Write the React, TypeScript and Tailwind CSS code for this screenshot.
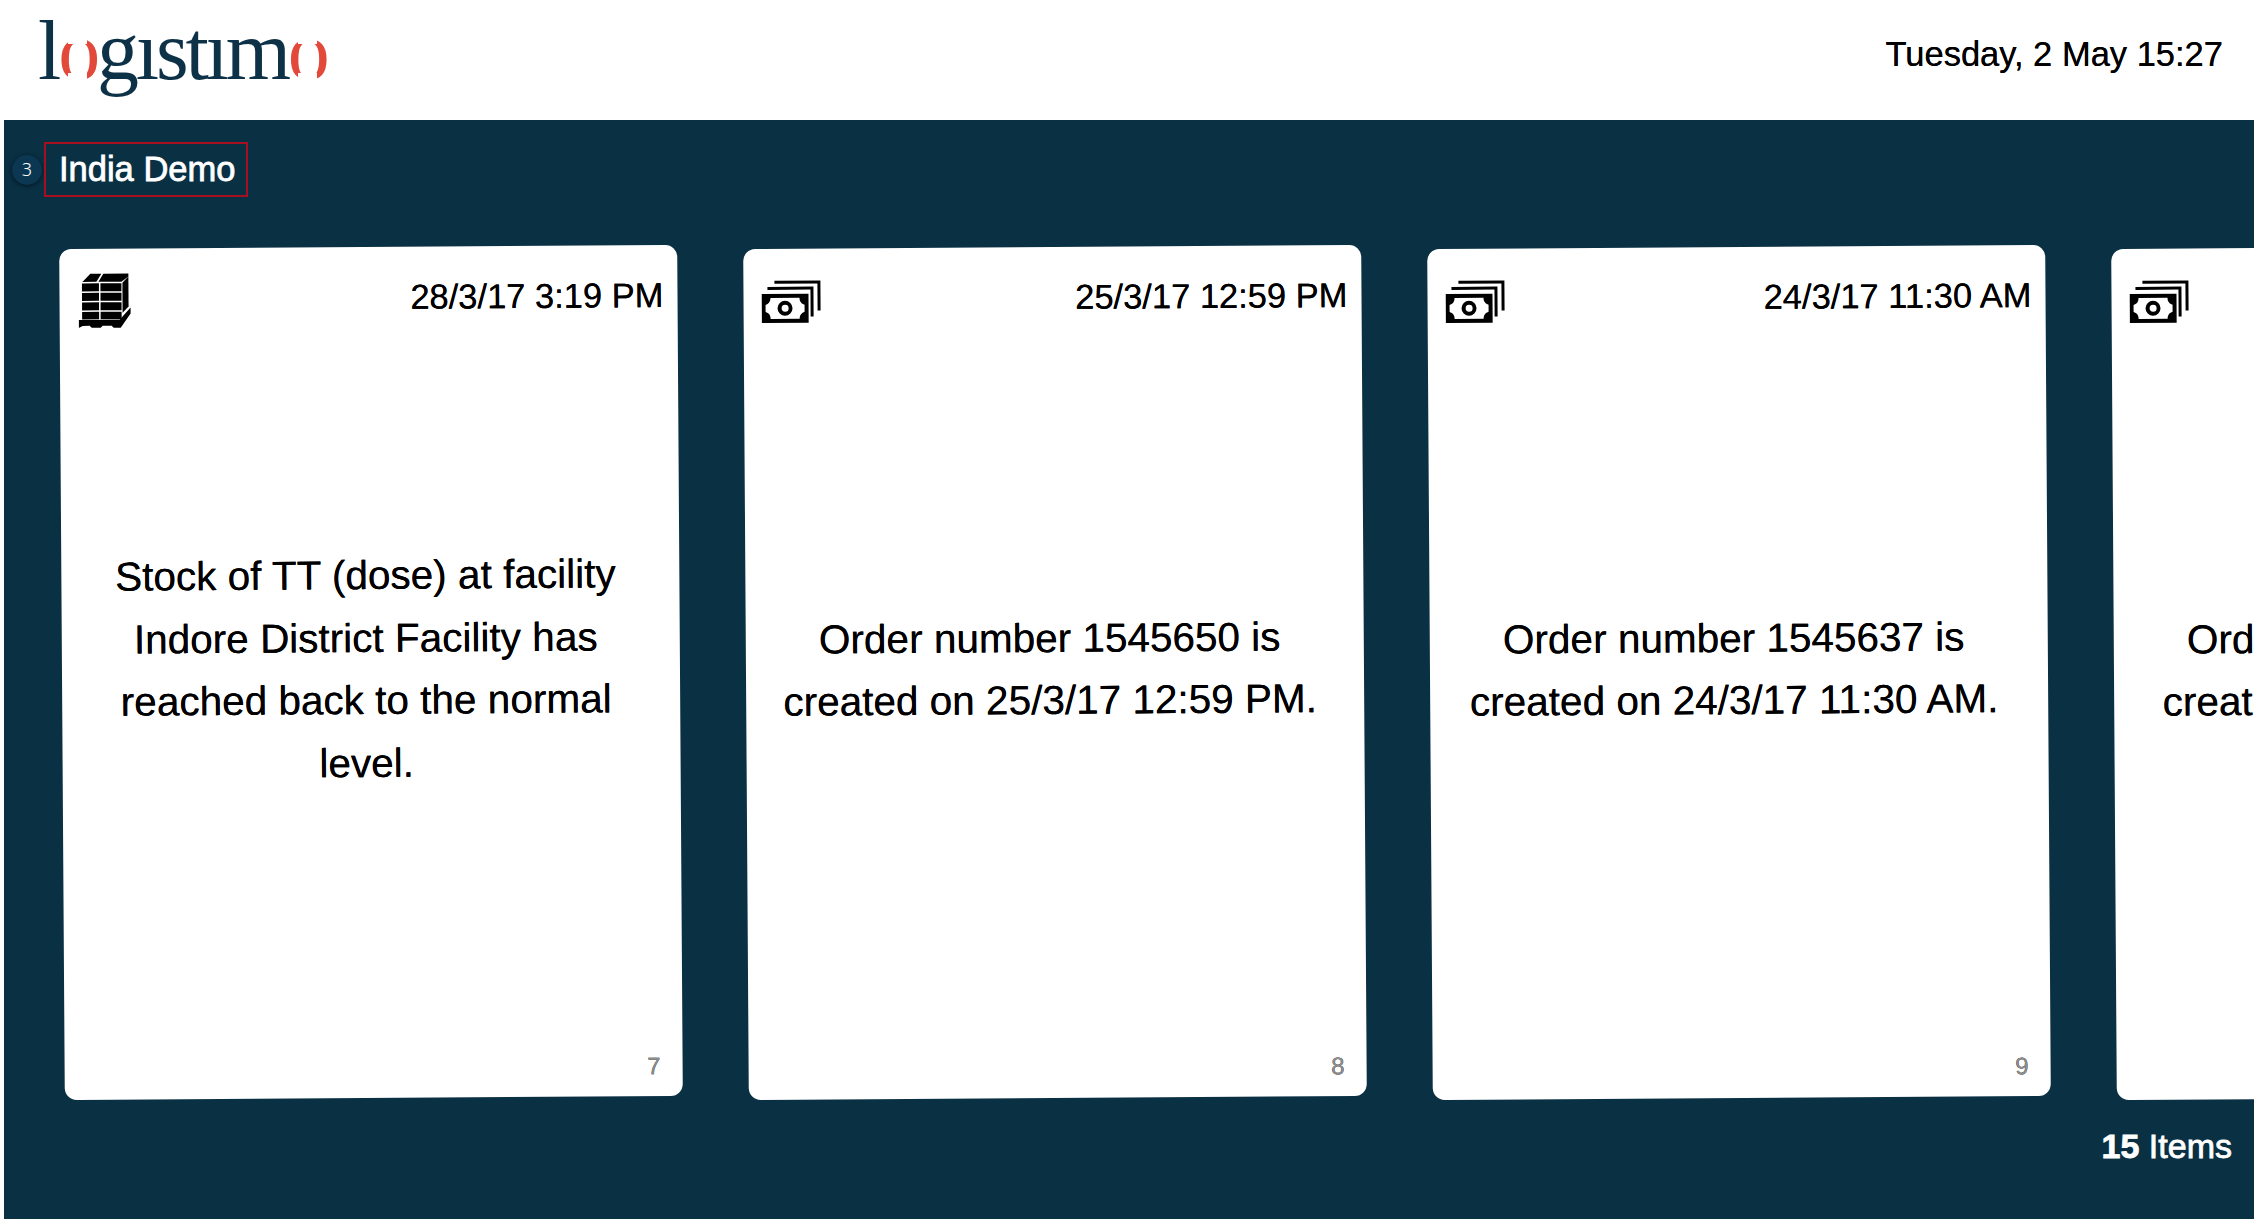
const sans = "font-['Liberation_Sans',Arial,sans-serif]";

function RedO() {
  return (
    <span className="relative inline-block text-[#e2493a]">
      o
      <span className="absolute left-[26%] right-[26%] top-[36%] h-[7%] bg-white" />
      <span className="absolute left-[26%] right-[26%] top-[72%] h-[10%] bg-white" />
    </span>
  );
}

function Pallet() {
  return (
    <svg viewBox="0 0 53 56" className="h-[56px] w-[53px]">
      <g fill="#000">
        <path d="M4 9 L12 1 H23 L18 9 Z" />
        <path d="M25 1 H50 V4 L43 9 H20 Z" />
        <rect x="3.5" y="10.5" width="17" height="8" />
        <rect x="3.5" y="20" width="17" height="8" />
        <rect x="3.5" y="29.5" width="17" height="8" />
        <rect x="3.5" y="39" width="17" height="7.5" />
        <rect x="22" y="10.5" width="21" height="8" />
        <rect x="22" y="20" width="21" height="8" />
        <rect x="22" y="29.5" width="21" height="8" />
        <rect x="22" y="39" width="21" height="7.5" />
        <path d="M44 10 L50 4 V34 L44 40 Z" />
        <path d="M0 47 H41 L52 35 V41 L42 55 H35 L33 53 H24 L22 55 H13 L11 53 H4 L0 55 Z" />
      </g>
    </svg>
  );
}

function Money() {
  return (
    <svg viewBox="0 0 60 44" className="h-[44px] w-[60px]">
      <g fill="#000">
        <path d="M13 1 H59 V31 H56 V4 H13 Z" />
        <path d="M6 7 H52 V37 H49 V10 H6 Z" />
        <path fillRule="evenodd" d="M0 14 H47 V43 H0 Z M9 18 C9 22 7 24 4 25 V32 C7 33 9 35 9 39 H38 C38 35 40 33 43 32 V25 C40 24 38 22 38 18 Z" />
        <path fillRule="evenodd" d="M23.5 21 A7.5 7.5 0 1 1 23.4 36 A7.5 7.5 0 1 1 23.5 21 Z M23.5 25 A3.5 3.5 0 1 0 23.6 32 A3.5 3.5 0 1 0 23.5 25 Z" />
      </g>
    </svg>
  );
}

type CardData = { icon: "pallet" | "money"; date: string; lines: string[]; n: number };

const cards: CardData[] = [
  { icon: "pallet", date: "28/3/17 3:19 PM", lines: ["Stock of TT (dose) at facility", "Indore District Facility has", "reached back to the normal", "level."], n: 7 },
  { icon: "money", date: "25/3/17 12:59 PM", lines: ["Order number 1545650 is", "created on 25/3/17 12:59 PM."], n: 8 },
  { icon: "money", date: "24/3/17 11:30 AM", lines: ["Order number 1545637 is", "created on 24/3/17 11:30 AM."], n: 9 },
  { icon: "money", date: "23/3/17 4:12 PM", lines: ["Order number 1545621 is", "created on 23/3/17 4:12 PM."], n: 10 },
];

function Card({ c }: { c: CardData }) {
  return (
    <div className="flex h-[851px] w-[618px] shrink-0 rotate-[-0.38deg] flex-col rounded-[12px] bg-white text-black [text-shadow:0_0_0.6px_#000]">
      <div className="flex h-[100px] items-start justify-between pl-[18px] pr-[14px] pt-[24px]">
        <div className={c.icon === "money" ? "pt-[7px]" : "pl-[1px]"}>
          {c.icon === "pallet" ? <Pallet /> : <Money />}
        </div>
        <span className="pt-[4px] text-[34.5px] leading-[44px]">{c.date}</span>
      </div>
      <div className="flex flex-1 flex-col items-center justify-center pb-[64px] pr-[10px] text-center text-[40.5px] leading-[62.5px]">
        {c.lines.map((l) => (
          <div key={l} className="whitespace-nowrap">{l}</div>
        ))}
      </div>
      <div className="flex h-[43px] justify-end pr-[22px] text-[24px] leading-[26px] text-[#8f8f8f]">{c.n}</div>
    </div>
  );
}

export default function App() {
  return (
    <div className={`${sans} flex h-[1219px] w-[2254px] flex-col overflow-hidden bg-white`}>
      <header className="flex h-[120px] shrink-0 items-start justify-between pl-[38px] pr-[31px]">
        <div className="font-['Liberation_Serif',serif] text-[84px] leading-[102px] tracking-[-3.2px] text-[#0d3247] whitespace-nowrap">
          l<RedO />gıstım<RedO />
        </div>
        <div className="pt-[31px] text-[34.5px] leading-[46px] text-black [text-shadow:0_0_0.6px_#000]">Tuesday, 2 May 15:27</div>
      </header>
      <main className="ml-[4px] flex flex-1 flex-col overflow-hidden bg-[#0a3044]">
        <div className="mt-[22px] flex items-center pl-[8px]">
          <span className="flex h-[30px] w-[30px] items-center justify-center rounded-full bg-[#0b3752] font-['Noto_Sans',sans-serif] text-[18px] font-light text-white shadow-[0_1px_4px_rgba(0,0,0,0.6)]">3</span>
          <span className="ml-[2px] flex h-[55px] w-[204px] items-center border-2 border-[#a50f1f] pl-[13px] text-[34.5px] text-white [-webkit-text-stroke:0.8px_#fff]">India Demo</span>
        </div>
        <div className="mt-[50px] flex gap-[66px] pl-[58px]">
          {cards.map((c) => (
            <Card key={c.n} c={c} />
          ))}
        </div>
        <div className="mt-[25px] pr-[22px] text-right text-[34px] leading-[46px] text-white [-webkit-text-stroke:0.8px_#fff]">
          <b>15</b> Items
        </div>
      </main>
    </div>
  );
}
